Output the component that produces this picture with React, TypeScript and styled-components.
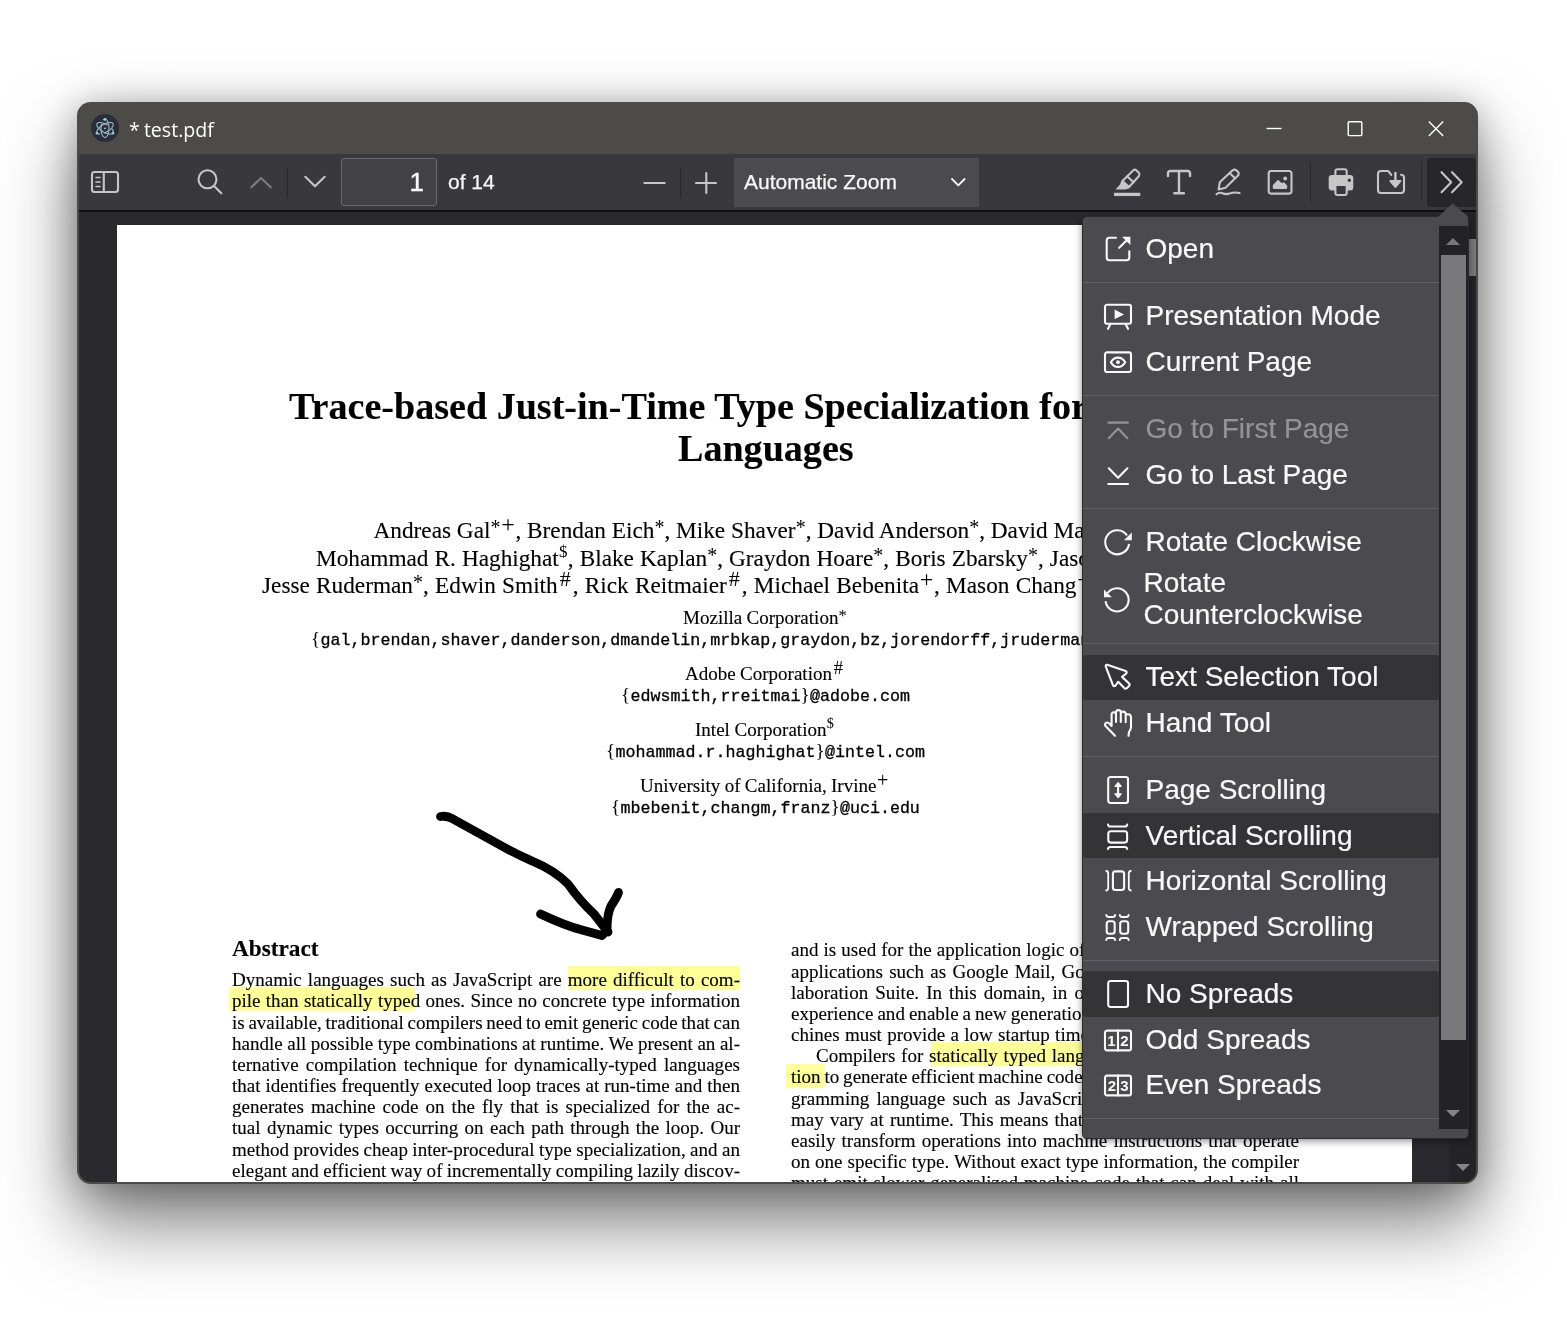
import React from "react";
import styled, { createGlobalStyle, css } from "styled-components";

const GlobalStyle = createGlobalStyle`
  *, *::before, *::after { box-sizing: border-box; }
  body { margin: 0; background: #fff; font-family: "Liberation Sans", Arial, sans-serif; }
`;

/* ---------- window chrome ---------- */

const Desktop = styled.main`
  width: 1567px;
  height: 1344px;
  padding: 102px 0 0 77px;
  overflow: hidden;
  background: #fff;
`;

const AppWindow = styled.div`
  position: relative;
  display: flex;
  flex-direction: column;
  width: 1401px;
  height: 1082px;
  border: 2px solid #4a4a48;
  border-top: 0;
  border-radius: 14px;
  background: #4c4b47;
  box-shadow: 0 38px 76px rgba(0, 0, 0, 0.52), 0 3px 36px rgba(0, 0, 0, 0.27);
`;

const TitleBar = styled.header`
  display: flex;
  align-items: center;
  height: 52px;
  padding: 0 32px 0 12px;
  color: #fff;
`;

const TitleText = styled.h1`
  margin: 3px 0 0 10px;
  font: 400 19.6px/28px "Open Sans", "Noto Sans", sans-serif;
  word-spacing: -1px;
`;

const WindowControls = styled.div`
  display: flex;
  gap: 65px;
  margin: 1px 0 0 auto;
`;

const ControlIcon = styled.svg`
  display: block;
  width: 16px;
  height: 16px;
  fill: none;
  stroke: #fff;
  stroke-width: 1.4;
`;

/* ---------- toolbar ---------- */

const Toolbar = styled.div`
  display: flex;
  flex: none;
  height: 56px;
  padding: 4px 0 0 1px;
  background: #38383d;
  color: #f9f9fa;
`;

const ToolGroup = styled.div<{ $width?: number; $end?: boolean }>`
  display: flex;
  align-items: flex-start;
  width: ${(p) => (p.$width ? `${p.$width}px` : "auto")};
  margin-left: ${(p) => (p.$end ? "auto" : "0")};
`;

const ToolButton = styled.button<{ $gap?: number; $dim?: boolean; $open?: boolean }>`
  display: flex;
  align-items: center;
  justify-content: center;
  width: ${(p) => (p.$open ? 49 : 50)}px;
  height: 49px;
  margin: 0 0 0 ${(p) => p.$gap ?? 0}px;
  padding: 0 0 1px;
  border: 0;
  border-radius: 3px;
  background: ${(p) => (p.$open ? "#27272b" : "transparent")};
  color: ${(p) => (p.$dim ? "#7d7d80" : "#c6c6c7")};
`;

const ToolSeparator = styled.span<{ $tall?: boolean; $gap?: number }>`
  flex: none;
  width: 1px;
  height: ${(p) => (p.$tall ? 40 : 30)}px;
  margin: ${(p) => (p.$tall ? 4 : 9)}px 0 0 ${(p) => p.$gap ?? 1}px;
  background: #28282c;
`;

const PageInput = styled.div`
  width: 96px;
  height: 48px;
  margin-left: 1px;
  padding-right: 12px;
  border: 1px solid #6b6b6e;
  border-radius: 3px;
  background: #414146;
  font-size: 26px;
  line-height: 46px;
  text-align: right;
  -webkit-text-stroke: 0.4px currentColor;
`;

const PageCount = styled.span`
  margin-left: 11px;
  font-size: 21px;
  line-height: 48px;
  -webkit-text-stroke: 0.25px currentColor;
`;

const ZoomSelect = styled.div`
  display: flex;
  align-items: center;
  justify-content: space-between;
  width: 245px;
  height: 49px;
  margin-left: 3px;
  padding: 0 13px 1px 10px;
  background: #4a4a4f;
  font-size: 21px;
  -webkit-text-stroke: 0.25px currentColor;
`;

const Icon = styled.svg<{ $w?: number }>`
  display: block;
  flex: none;
  width: ${(p) => p.$w ?? 28}px;
  height: 28px;
  overflow: visible;
  fill: none;
  stroke: currentColor;
  stroke-width: 2.1;
  stroke-linecap: round;
  stroke-linejoin: round;
`;

const SmallChevron = styled(Icon)`
  width: 16px;
  height: 16px;
  stroke: #fff;
`;

/* ---------- document ---------- */

const Viewer = styled.div`
  display: flex;
  flex: 1;
  min-height: 0;
  overflow: hidden;
  border-top: 2px solid #0f0f11;
  border-radius: 0 0 12px 12px;
  background: #2a2a2e;
`;

const Paper = styled.article`
  position: relative;
  flex: none;
  width: 1295px;
  margin: 13px 0 0 38px;
  overflow: hidden;
  background: #fff;
  color: #000;
  font-family: "Liberation Serif", "Times New Roman", serif;
  -webkit-text-stroke: 0.12px currentColor;
`;

const Front = styled.header`
  padding-top: 160px;
`;

const lineBase = css<{ $start: number; $extra?: number }>`
  margin: 0 0 0 ${(p) => p.$start - 117}px;
  width: ${(p) => 2 * (764.5 - p.$start) + (p.$extra ?? 0)}px;
  white-space: nowrap;
  text-align: justify;
  text-align-last: justify;
`;

const TitleLine = styled.div<{ $start: number; $extra?: number }>`
  ${lineBase}
  font-size: 38.1px;
  font-weight: 700;
  line-height: 42.3px;
`;

const Authors = styled.div`
  margin-top: 47.8px;
`;

const AuthorLine = styled.div<{ $start: number; $extra?: number }>`
  ${lineBase}
  font-size: 23.28px;
  line-height: 27.5px;
  word-spacing: -1px;
`;

const Institution = styled.section`
  height: 55.8px;
  padding-top: 7.5px;
`;

const InstitutionName = styled.div<{ $start: number; $extra?: number }>`
  ${lineBase}
  height: 22px;
  font-size: 19.05px;
  line-height: 22px;
  word-spacing: -0.5px;
`;

const Email = styled.div<{ $start: number; $extra?: number }>`
  ${lineBase}
  text-align-last: left;
  height: 22px;
  font: 16.67px/22px "Liberation Mono", "Courier New", monospace;
  -webkit-text-stroke: 0.3px currentColor;
`;

const Brace = styled.span`
  display: inline-block;
  width: 9.5px;
  font: 19px/20px "Liberation Serif", serif;
  -webkit-text-stroke: 0;
`;

const Mark = styled.sup<{ $w: number; $size: number; $rise: number }>`
  display: inline-block;
  width: ${(p) => p.$w}px;
  height: 0;
  font-size: ${(p) => p.$size}px;
  line-height: 0;
  text-align: center;
  text-align-last: center;
  vertical-align: ${(p) => p.$rise}px;
  -webkit-text-stroke: 0;
`;

const Columns = styled.div`
  display: grid;
  grid-template-columns: 508px 508px;
  column-gap: 51px;
  height: 242px;
  margin: 111px 0 0 115px;
`;

const Heading = styled.h2`
  margin: 0 0 7.2px;
  font-size: 23.28px;
  line-height: 28px;
`;

const RightColumn = styled.div`
  padding-top: 5.4px;
`;

const BodyLine = styled.div<{ $indent?: boolean; $ragged?: boolean }>`
  padding-left: ${(p) => (p.$indent ? 25 : 0)}px;
  font-size: 19.05px;
  line-height: 21.16px;
  word-spacing: ${(p) => (p.$ragged ? 0.5 : -2)}px;
  white-space: nowrap;
  text-align: justify;
  text-align-last: ${(p) => (p.$ragged ? "left" : "justify")};
`;

/* Annotations float over the page text. */
const Highlight = styled.span<{ $x: number; $y: number; $w: number }>`
  position: absolute;
  left: ${(p) => p.$x}px;
  top: ${(p) => p.$y}px;
  width: ${(p) => p.$w}px;
  height: 24px;
  background: #ffff98;
  mix-blend-mode: multiply;
`;

const Ink = styled.svg`
  position: absolute;
  left: 313px;
  top: 580px;
  width: 200px;
  height: 140px;
  fill: none;
  stroke: #000;
  stroke-width: 8.8;
  stroke-linecap: round;
  stroke-linejoin: round;
`;

const ViewerScrollbar = styled.div`
  display: flex;
  flex-direction: column;
  justify-content: space-between;
  align-items: center;
  width: 27px;
  margin-left: auto;
  padding: 27px 0 11px 1px;
  background: #242428;
`;

const ViewerThumb = styled.div`
  width: 25px;
  height: 37px;
  background: #79797b;
`;

const Triangle = styled.span<{ $down?: boolean }>`
  width: 0;
  height: 0;
  border: 7px solid transparent;
  ${(p) =>
    p.$down
      ? "border-top-color: #858587; border-bottom-width: 0;"
      : "border-bottom-color: #79797b; border-top-width: 0;"}
`;

/* ---------- secondary menu ---------- */

const Menu = styled.aside`
  position: absolute;
  left: 1004px;
  top: 115px;
  width: 385px;
  height: 921px;
  padding: 9px 0 9px 0;
  border-radius: 4px;
  background: #4a4a4f;
  color: #f9f9fa;
  box-shadow: 0 0 0 1px #2c2c30, 0 2px 9px rgba(0, 0, 0, 0.55);
  display: flex;
`;

const MenuArrow = styled.svg`
  position: absolute;
  right: 0;
  top: -14px;
  width: 30px;
  height: 18px;
  fill: #4a4a4f;
`;

const MenuList = styled.div`
  flex: 1;
  height: 903px;
`;

const MenuItem = styled.button<{ $on?: boolean; $off?: boolean }>`
  display: flex;
  align-items: center;
  width: 100%;
  height: 45.5px;
  padding: 0 0 0 21px;
  border: 0;
  border-radius: 3px;
  background: ${(p) => (p.$on ? "#343436" : "transparent")};
  color: ${(p) => (p.$off ? "#949497" : "inherit")};
  font: 28px/32px "Liberation Sans", Arial, sans-serif;
  -webkit-text-stroke: 0.2px currentColor;
  text-align: left;
`;

const TallMenuItem = styled(MenuItem)`
  height: 68px;
`;

const ItemLabel = styled.span`
  margin: 0.4px 0 0 13.5px;
`;

const MenuRule = styled.hr`
  height: 1px;
  margin: 10.45px 0 10.45px;
  border: 0;
  background: #606065;
`;

const MenuScrollbar = styled.div`
  display: flex;
  flex-direction: column;
  align-items: center;
  width: 29px;
  background: #232327;
  padding: 12px 1px 12px 0;
`;

const MenuThumb = styled.div`
  width: 25px;
  height: 785px;
  margin: 10px 0 auto;
  background: #79797b;
`;

const Digits = styled.text`
  fill: currentColor;
  stroke: none;
  font: 700 15px "Liberation Sans", sans-serif;
  text-anchor: middle;
`;

/* ---------- icon drawings ---------- */

const ElectronLogo = () => (
  <svg width="28" height="28" viewBox="0 0 28 28" fill="none" stroke="#96bfcb" strokeWidth="1.1">
    <circle cx="14" cy="14" r="14" fill="#2b2e3a" stroke="none" />
    <ellipse cx="14" cy="14.3" rx="9.3" ry="4" transform="rotate(30 14 14.3)" strokeDasharray="33 5" />
    <ellipse cx="14" cy="14.3" rx="9.3" ry="4" transform="rotate(-30 14 14.3)" strokeDasharray="14 4 30" />
    <ellipse cx="14" cy="14.3" rx="4" ry="9.3" strokeDasharray="26 4 30" />
    <g fill="#a3cfdb" stroke="none">
      <circle cx="14" cy="14.3" r="0.9" />
      <circle cx="14" cy="5.4" r="1.3" />
      <circle cx="6" cy="19.3" r="1.3" />
      <circle cx="22" cy="19.3" r="1.3" />
    </g>
  </svg>
);

const icons: Record<string, React.ReactNode> = {
  sidebar: (
    <>
      <rect x="1" y="4" width="26" height="20" rx="2.5" />
      <path d="M12.8 4V24" />
      <path d="M5 9.5H9M5 14H9M5 18.5H9" strokeWidth="1.6" />
    </>
  ),
  search: (
    <>
      <circle cx="11.5" cy="11.3" r="9" />
      <path d="M18.3 18.3L25.3 25.3" />
    </>
  ),
  up: <path d="M4.3 19.3L14 10L23.7 19.3" />,
  down: <path d="M4.3 8.8L14 18.3L23.7 8.8" />,
  minus: <path d="M4.3 15H24.7" />,
  plus: <path d="M4 15H24M14.3 5V25" />,
  highlight: (
    <>
      <path d="M9.5 13L20.3 2.2Q21.8 1 23.3 2.3L26 5Q27.2 6.5 26 8L16 19Z" />
      <path d="M14.3 8.5L20.6 14.3" />
      <path d="M8.5 12.5L17 20L12.5 21.5H2.5L7 16.5Z" fill="currentColor" stroke="none" />
      <path d="M1 26.4H27.3" strokeWidth="3.3" strokeLinecap="butt" />
    </>
  ),
  text: <path d="M3 8V5.5Q3 3 5.5 3H22.5Q25 3 25 5.5V8M14 3V25.3M9.3 25.3H18.9" strokeWidth="2.4" />,
  draw: (
    <>
      <path d="M3.6 21.4L4.8 14.3L17.6 2.3Q19.6 0.8 21.5 2.4L23 3.8Q24.5 5.7 23 7.5L10.5 19.8Z" />
      <path d="M14.8 5.2L20 10.2" />
      <path d="M1.5 26.3Q4 23.8 7.5 25.3T14.5 25.6Q19 23.8 24.6 25" />
    </>
  ),
  image: (
    <>
      <rect x="2.7" y="3" width="22.8" height="22.6" rx="2.5" />
      <path d="M6.7 19.5L6.9 17L12 11.8L16 15.3L18 14.3L21.2 17.5V19.5Q21 21 19.5 21H8.2Q6.8 21 6.7 19.5Z" fill="currentColor" stroke="none" />
      <circle cx="19.2" cy="10.5" r="1.9" fill="currentColor" stroke="none" />
    </>
  ),
  print: (
    <>
      <path d="M8.4 8V3.5Q8.4 1.2 10.6 1.2H17.4Q19.7 1.2 19.7 3.5V8" />
      <path d="M5 7H23Q26.3 7 26.3 10.3V19Q26.3 22.6 23 22.6H5Q1.7 22.6 1.7 19V10.3Q1.7 7 5 7Z" fill="currentColor" stroke="none" />
      <path d="M8.4 17H19.7V25Q19.7 27 17.7 27H10.4Q8.4 27 8.4 25Z" fill="#38383d" />
      <circle cx="22.3" cy="12.3" r="1.7" fill="#38383d" stroke="none" />
    </>
  ),
  save: (
    <>
      <path d="M14.3 6.8L12 3.8Q11.3 3 10.3 3H4Q1 3 1 6V22Q1 25 4 25H24Q27 25 27 22V9.3Q27 7 24 6.7" />
      <path d="M18.4 5V16" strokeWidth="2.4" />
      <path d="M13.5 13H23.3L18.4 18.8Z" fill="currentColor" />
    </>
  ),
  more: <path d="M3.5 4.2L13.2 14.2L3.5 24.2M14 4.2L23.7 14.2L14 24.2" />,
  open: (
    <>
      <path d="M12 2.8H5.3Q2.7 2.8 2.7 5.4V22.6Q2.7 25.3 5.3 25.3H22.6Q25.3 25.3 25.3 22.6V16.3" />
      <path d="M15.2 12.8L23 5" />
      <path d="M18 1.7H26.4V10Z" fill="currentColor" stroke="none" />
    </>
  ),
  present: (
    <>
      <rect x="1" y="2.8" width="26" height="19" rx="2" />
      <path d="M10.6 7.5V17.3L20 12.4Z" fill="currentColor" stroke="none" />
      <path d="M6.3 22.3L4 26.8M21.7 22.3L24 26.8" />
    </>
  ),
  current: (
    <>
      <rect x="1" y="4.4" width="26" height="19.6" rx="2" />
      <path d="M6.8 14.2Q9.5 9.6 14 9.6T21.2 14.2Q18.5 18.9 14 18.9T6.8 14.2Z" />
      <circle cx="14" cy="14.2" r="1.9" fill="currentColor" stroke="none" />
    </>
  ),
  first: <path d="M4.3 7.6H24M4.8 23.3L14.1 13.6L23.4 23.3" />,
  last: <path d="M4.3 23H24M4.8 7.3L14.1 16.8L23.4 7.3" />,
  cw: (
    <>
      <path d="M25.1 16A12 12 0 1 1 23 7.3" strokeLinecap="butt" />
      <path d="M27.8 4.4V12.2H20Z" fill="currentColor" stroke="none" />
    </>
  ),
  ccw: (
    <>
      <path d="M1.5 16.2A11.6 11.6 0 1 0 3.6 8" strokeLinecap="butt" />
      <path d="M0 4.4V12.3H7.8Z" fill="currentColor" stroke="none" />
    </>
  ),
  pointer: (
    <path d="M3.2 1.8L21.6 8Q23.5 9 22 10.7L18 13.9L24.9 20.2Q26.2 21.6 25 23L23 25Q21.6 26.2 20.2 25L14.2 18.8L11.4 22.6Q10 24 8.9 22.2L1.8 3.6Q1.4 1.6 3.2 1.8Z" />
  ),
  hand: (
    <path d="M11 26.8L2 17.5Q0 15.5 1.8 14Q3.8 12.8 5.6 14.7L7.6 17V5.5Q7.6 3.3 9.7 3.3Q12 3.3 12 5.5V13M12 5V3.5Q12 1.1 14.4 1.1Q16.8 1.1 16.8 3.5V13M16.8 4.5Q17 2.6 19.3 2.6Q21.7 2.6 21.7 5.2V13.3M21.7 7Q22 5.3 24 5.3Q27 5.3 27 8.5V18Q27 20 25 23L24.5 26.8" />
  ),
  pageScroll: (
    <>
      <rect x="4.2" y="1" width="19.8" height="26" rx="2.2" />
      <path d="M14.1 8V20" />
      <path d="M14.1 6.6L11 10.3H17.2ZM14.1 21.6L11 17.8H17.2Z" fill="currentColor" strokeWidth="1.2" />
    </>
  ),
  vertical: (
    <>
      <rect x="4.3" y="9.2" width="18.8" height="11.4" rx="2.5" />
      <path d="M4 2.6Q4.3 4.6 6.5 4.6H20.8Q22.9 4.6 23.2 2.6M4 27Q4.3 25 6.5 25H20.8Q22.9 25 23.2 27" strokeWidth="2" />
    </>
  ),
  horizontal: (
    <>
      <rect x="8.9" y="4.4" width="11.2" height="18.6" rx="2.5" />
      <path d="M2.2 4Q4.2 4.3 4.2 6.5V21Q4.2 23.2 2.2 23.5M26.8 4Q24.8 4.3 24.8 6.5V21Q24.8 23.2 26.8 23.5" strokeWidth="1.8" />
    </>
  ),
  wrapped: (
    <>
      <rect x="2.7" y="8.3" width="8" height="12.4" rx="2.5" />
      <rect x="16.2" y="8.3" width="8" height="12.4" rx="2.5" />
      <path
        d="M2.3 2Q2.5 4 4.7 4H8.7Q10.9 4 11.1 2M15.8 2Q16 4 18.2 4H22.2Q24.4 4 24.6 2M2.3 27Q2.5 25 4.7 25H8.7Q10.9 25 11.1 27M15.8 27Q16 25 18.2 25H22.2Q24.4 25 24.6 27"
        strokeWidth="2"
      />
    </>
  ),
  noSpread: <rect x="4.2" y="1" width="19.8" height="26" rx="2.2" />,
  odd: (
    <>
      <rect x="1" y="4.6" width="26" height="19.8" rx="2" />
      <path d="M14 4.6V24.4" />
      <Digits x="7.5" y="20">1</Digits>
      <Digits x="20.3" y="20">2</Digits>
    </>
  ),
  even: (
    <>
      <rect x="1" y="4.6" width="26" height="19.8" rx="2" />
      <path d="M14 4.6V24.4" />
      <Digits x="7.8" y="20">2</Digits>
      <Digits x="20.3" y="20">3</Digits>
    </>
  ),
};

const Glyph = ({ name, w }: { name: string; w?: number }) => (
  <Icon $w={w} viewBox={`0 0 ${w ?? 28} 28`} aria-hidden="true">
    {icons[name]}
  </Icon>
);

/* ---------- content ---------- */

type Entry = { icon: string; label: string; on?: boolean; off?: boolean };

const menuGroups: Entry[][] = [
  [{ icon: "open", label: "Open" }],
  [
    { icon: "present", label: "Presentation Mode" },
    { icon: "current", label: "Current Page" },
  ],
  [
    { icon: "first", label: "Go to First Page", off: true },
    { icon: "last", label: "Go to Last Page" },
  ],
  [
    { icon: "cw", label: "Rotate Clockwise" },
    { icon: "ccw", label: "Rotate Counterclockwise" },
  ],
  [
    { icon: "pointer", label: "Text Selection Tool", on: true },
    { icon: "hand", label: "Hand Tool" },
  ],
  [
    { icon: "pageScroll", label: "Page Scrolling" },
    { icon: "vertical", label: "Vertical Scrolling", on: true },
    { icon: "horizontal", label: "Horizontal Scrolling" },
    { icon: "wrapped", label: "Wrapped Scrolling" },
  ],
  [
    { icon: "noSpread", label: "No Spreads", on: true },
    { icon: "odd", label: "Odd Spreads" },
    { icon: "even", label: "Even Spreads" },
  ],
];

const abstractLines = [
  "Dynamic languages such as JavaScript are more difficult to com-",
  "pile than statically typed ones. Since no concrete type information",
  "is available, traditional compilers need to emit generic code that can",
  "handle all possible type combinations at runtime. We present an al-",
  "ternative compilation technique for dynamically-typed languages",
  "that identifies frequently executed loop traces at run-time and then",
  "generates machine code on the fly that is specialized for the ac-",
  "tual dynamic types occurring on each path through the loop. Our",
  "method provides cheap inter-procedural type specialization, and an",
  "elegant and efficient way of incrementally compiling lazily discov-",
];

const introLines: { text: string; indent?: boolean; ragged?: boolean }[] = [
  { text: "and is used for the application logic of browser-based productivity" },
  { text: "applications such as Google Mail, Google Docs and Zimbra Col-" },
  { text: "laboration Suite. In this domain, in order to provide a fluid user" },
  { text: "experience and enable a new generation of applications, virtual ma-" },
  { text: "chines must provide a low startup time and high performance.", ragged: true },
  { text: "Compilers for statically typed languages rely on type informa-", indent: true },
  { text: "tion to generate efficient machine code. In a dynamically typed pro-" },
  { text: "gramming language such as JavaScript, the types of expressions" },
  { text: "may vary at runtime. This means that the compiler can no longer" },
  { text: "easily transform operations into machine instructions that operate" },
  { text: "on one specific type. Without exact type information, the compiler" },
  { text: "must emit slower generalized machine code that can deal with all" },
];

const markStyles: Record<string, { w: number; size: number; rise: number }> = {
  "*": { w: 10, size: 20, rise: 4 },
  "+": { w: 15, size: 24, rise: 6 },
  "#": { w: 15, size: 22, rise: 7 },
  $: { w: 9, size: 17, rise: 9 },
};

/* Affiliation symbols follow a caret in the source strings: "Name^*+,". */
const Marked = ({ text, scale = 1 }: { text: string; scale?: number }) => (
  <>
    {text.split(/(\^[*+#$]+)/).map((part, i) =>
      part.startsWith("^")
        ? part
            .slice(1)
            .split("")
            .map((c, j) => {
              const m = markStyles[c];
              return (
                <Mark key={`${i}-${j}`} $w={m.w * scale} $size={m.size * scale} $rise={m.rise * scale}>
                  {c}
                </Mark>
              );
            })
        : part
    )}
  </>
);

const institutions = [
  { name: "Mozilla Corporation^*", start: 683, users: "gal,brendan,shaver,danderson,dmandelin,mrbkap,graydon,bz,jorendorff,jruderman,nnethercote", host: "@mozilla.com", emailStart: 311 },
  { name: "Adobe Corporation^#", start: 685, users: "edwsmith,rreitmai", host: "@adobe.com", emailStart: 621 },
  { name: "Intel Corporation^$", start: 695, users: "mohammad.r.haghighat", host: "@intel.com", emailStart: 606 },
  { name: "University of California, Irvine^+", start: 640, users: "mbebenit,changm,franz", host: "@uci.edu", emailStart: 611 },
];

const SecondaryMenu = () => (
  <Menu>
    <MenuArrow viewBox="0 0 30 18">
      <path d="M0 14L14.5 0.5L29 12.5Q30 13.5 30 15V18H0Z" />
    </MenuArrow>
    <MenuList>
      {menuGroups.map((group, g) => (
        <React.Fragment key={g}>
          {group.map((e) => {
            const tall = e.icon === "ccw";
            const Row = tall ? TallMenuItem : MenuItem;
            return (
              <Row key={e.icon} $on={e.on} $off={e.off}>
                <Glyph name={e.icon} w={tall ? 26 : undefined} />
                <ItemLabel>{e.label}</ItemLabel>
              </Row>
            );
          })}
          <MenuRule />
        </React.Fragment>
      ))}
    </MenuList>
    <MenuScrollbar>
      <Triangle />
      <MenuThumb />
      <Triangle $down />
    </MenuScrollbar>
  </Menu>
);

export default function App() {
  return (
    <Desktop>
      <GlobalStyle />
      <AppWindow>
        <TitleBar>
          <ElectronLogo />
          <TitleText>* test.pdf</TitleText>
          <WindowControls>
            <ControlIcon viewBox="0 0 16 16"><path d="M0.5 7.5H15.5" /></ControlIcon>
            <ControlIcon viewBox="0 0 16 16"><rect x="1.2" y="0.8" width="13.6" height="13.8" rx="1" /></ControlIcon>
            <ControlIcon viewBox="0 0 16 16"><path d="M0.8 0.5L15.2 15M15.2 0.5L0.8 15" /></ControlIcon>
          </WindowControls>
        </TitleBar>

        <Toolbar>
          <ToolGroup $width={549}>
            <ToolButton><Glyph name="sidebar" /></ToolButton>
            <ToolButton $gap={55}><Glyph name="search" /></ToolButton>
            <ToolButton $gap={1} $dim><Glyph name="up" /></ToolButton>
            <ToolSeparator />
            <ToolButton $gap={2}><Glyph name="down" /></ToolButton>
            <PageInput>1</PageInput>
            <PageCount>of 14</PageCount>
          </ToolGroup>
          <ToolGroup>
            <ToolButton><Glyph name="minus" /></ToolButton>
            <ToolSeparator />
            <ToolButton><Glyph name="plus" /></ToolButton>
            <ZoomSelect>
              Automatic Zoom
              <SmallChevron viewBox="0 0 16 16"><path d="M2 5L8.3 11.3L14.6 5" strokeWidth="1.8" /></SmallChevron>
            </ZoomSelect>
          </ToolGroup>
          <ToolGroup $end>
            <ToolButton><Glyph name="highlight" /></ToolButton>
            <ToolButton $gap={2}><Glyph name="text" /></ToolButton>
            <ToolButton><Glyph name="draw" /></ToolButton>
            <ToolButton $gap={1}><Glyph name="image" /></ToolButton>
            <ToolSeparator $tall $gap={5} />
            <ToolButton $gap={5}><Glyph name="print" /></ToolButton>
            <ToolButton><Glyph name="save" /></ToolButton>
            <ToolSeparator $tall $gap={5} />
            <ToolButton $gap={5} $open><Glyph name="more" /></ToolButton>
          </ToolGroup>
        </Toolbar>

        <Viewer>
          <Paper>
            <Front>
              <TitleLine $start={289}>Trace-based Just-in-Time Type Specialization for Dynamic</TitleLine>
              <TitleLine $start={678}>Languages</TitleLine>
              <Authors>
                <AuthorLine $start={373.5} $extra={3}>
                  <Marked text="Andreas Gal^*+, Brendan Eich^*, Mike Shaver^*, David Anderson^*, David Mandelin^*," />
                </AuthorLine>
                <AuthorLine $start={316} $extra={3}>
                  <Marked text="Mohammad R. Haghighat^$, Blake Kaplan^*, Graydon Hoare^*, Boris Zbarsky^*, Jason Orendorff^*," />
                </AuthorLine>
                <AuthorLine $start={262} $extra={2}>
                  <Marked text="Jesse Ruderman^*, Edwin Smith^#, Rick Reitmaier^#, Michael Bebenita^+, Mason Chang^+#, Michael Franz^+" />
                </AuthorLine>
              </Authors>
              {institutions.map((inst) => (
                <Institution key={inst.name}>
                  <InstitutionName $start={inst.start}>
                    <Marked text={inst.name} scale={0.84} />
                  </InstitutionName>
                  <Email $start={inst.emailStart}>
                    <Brace>{"{"}</Brace>
                    {inst.users}
                    <Brace>{"}"}</Brace>
                    {inst.host}
                  </Email>
                </Institution>
              ))}
            </Front>
            <Columns>
              <div>
                <Heading>Abstract</Heading>
                {abstractLines.map((t) => <BodyLine key={t}>{t}</BodyLine>)}
              </div>
              <RightColumn>
                {introLines.map((l) => (
                  <BodyLine key={l.text} $indent={l.indent} $ragged={l.ragged}>{l.text}</BodyLine>
                ))}
              </RightColumn>
            </Columns>
            <Highlight $x={451} $y={741} $w={171.5} />
            <Highlight $x={112} $y={762} $w={186} />
            <Highlight $x={814} $y={817} $w={320} />
            <Highlight $x={669} $y={839} $w={39} />
            <Ink viewBox="430 805 200 140">
              <path d="M440.5 816.5Q447 815.5 452 818.5L500 845Q514 853 532 861Q554 870 568 884Q580 901 594 914L608 932" />
              <path d="M540.5 914Q566 926 582 930L602 935.5L607 930Q607 914 611 906Q617 897 618.5 892.5" />
            </Ink>
          </Paper>
          <ViewerScrollbar>
            <ViewerThumb />
            <Triangle $down />
          </ViewerScrollbar>
        </Viewer>
        <SecondaryMenu />
      </AppWindow>
    </Desktop>
  );
}
